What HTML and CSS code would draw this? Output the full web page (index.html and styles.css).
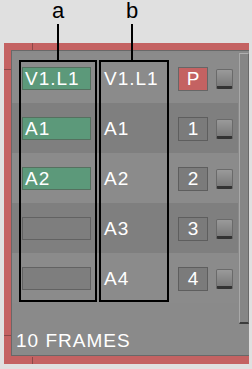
FILE: index.html
```html
<!DOCTYPE html>
<html lang="en">
<head>
    <meta charset="UTF-8">
    <meta name="viewport" content="width=device-width, initial-scale=1.0">
    <title>Track patch</title>
    <link rel="stylesheet" href="styles.css">
</head>
<body>
    <div class="frame">
        <div class="panel">
            <div class="body">
                <div class="rows">
                    <div class="row">
                        <div class="field on">V1.L1</div>
                        <div class="name">V1.L1</div>
                        <div class="num rec">P</div>
                        <div class="btn"></div>
                    </div>
                    <div class="row">
                        <div class="field on">A1</div>
                        <div class="name">A1</div>
                        <div class="num">1</div>
                        <div class="btn"></div>
                    </div>
                    <div class="row">
                        <div class="field on">A2</div>
                        <div class="name">A2</div>
                        <div class="num">2</div>
                        <div class="btn"></div>
                    </div>
                    <div class="row">
                        <div class="field"></div>
                        <div class="name">A3</div>
                        <div class="num">3</div>
                        <div class="btn"></div>
                    </div>
                    <div class="row">
                        <div class="field"></div>
                        <div class="name">A4</div>
                        <div class="num">4</div>
                        <div class="btn"></div>
                    </div>
                </div>
                <div class="scroll"></div>
            </div>
            <p class="footer">10 FRAMES</p>
        </div>
    </div>

    <!-- callouts -->
    <div class="callout callout-a">a</div>
    <div class="callout callout-b">b</div>
    <div class="outline outline-a"></div>
    <div class="outline outline-b"></div>
</body>
</html>
```

FILE: styles.css
```css
body {
    margin: 0;
    padding-top: 43px;
    box-sizing: border-box;
    background-color: #e0e0e0;
    font-family: "Liberation Sans", Arial, sans-serif;
    width: 252px;
    height: 369px;
    overflow: hidden;
    position: relative;
}
.frame {
    margin-left: 4px;
    width: 238px;
    height: 306px;
    padding: 7px 0 8px 7px;
    background:
        linear-gradient(#8c4848, #8c4848) 28px 0 / 1px 7px no-repeat,
        linear-gradient(#8c4848, #8c4848) 28px 314px / 1px 7px no-repeat,
        linear-gradient(#8c4848, #8c4848) 0 26px / 7px 1px no-repeat,
        linear-gradient(#8c4848, #8c4848) 0 292px / 7px 1px no-repeat,
        #c46262;
}
.panel {
    box-sizing: border-box;
    height: 306px;
    border: 1px solid #686868;
    border-right: none;
    background-color: #8a8a8a;
    padding-top: 2px;
}
.body {
    display: flex;
    align-items: flex-start;
}
.rows {
    width: 226px;
}
.row {
    height: 50px;
    display: flex;
    align-items: flex-start;
    padding-top: 14px;
    box-sizing: border-box;
    background-color: #8b8b8b;
}
.row:nth-child(even) {
    background-color: #7f7f7f;
}
.field {
    box-sizing: border-box;
    width: 69px;
    height: 23px;
    margin-left: 10px;
    border: 1px solid #626262;
    background-color: #7e7e7e;
    color: #fff;
    font-size: 19px;
    line-height: 21px;
    letter-spacing: 1px;
    padding-left: 2px;
}
.field.on {
    background-color: #5c997a;
    border-color: #55705f;
}
.name {
    width: 74px;
    margin-left: 13px;
    color: #fff;
    font-size: 19px;
    line-height: 23px;
    letter-spacing: 1px;
}
.num {
    box-sizing: border-box;
    width: 30px;
    height: 24px;
    border: 1px solid #5e5e5e;
    background-color: #7b7b7b;
    color: #fff;
    font-size: 19px;
    line-height: 22px;
    text-align: center;
}
.num.rec {
    background-color: #c46262;
    border-color: #666;
}
.btn {
    box-sizing: border-box;
    width: 17px;
    height: 20px;
    margin: 2px 0 0 8px;
    border-radius: 2px;
    border: 1px solid #6a6a6a;
    border-bottom: 3px solid #333;
    background: linear-gradient(#9a9a9a, #7a7a7a);
}
.scroll {
    box-sizing: border-box;
    width: 10px;
    height: 271px;
    margin-left: 1px;
    border: 1px solid #6a6a6a;
    border-left-color: #a8a8a8;
    border-top-color: #b0b0b0;
    border-bottom: 2px solid #3c3c3c;
    background-color: #868686;
}
.footer {
    margin: 7px 0 0 4px;
    color: #fff;
    font-size: 19px;
    line-height: 19px;
    letter-spacing: 1px;
}
.callout {
    position: absolute;
    top: 1px;
    width: 24px;
    text-align: center;
    font-size: 22px;
    line-height: 20px;
    color: #000;
}
.callout::after {
    content: "";
    display: block;
    width: 2px;
    height: 36px;
    margin: 3px auto 0;
    background-color: #000;
}
.callout-a {
    left: 46px;
}
.callout-b {
    left: 120px;
}
.outline {
    position: absolute;
    top: 60px;
    height: 242px;
    box-sizing: border-box;
    border: 2px solid #000;
}
.outline-a {
    left: 19px;
    width: 78px;
}
.outline-b {
    left: 99px;
    width: 70px;
}
```
